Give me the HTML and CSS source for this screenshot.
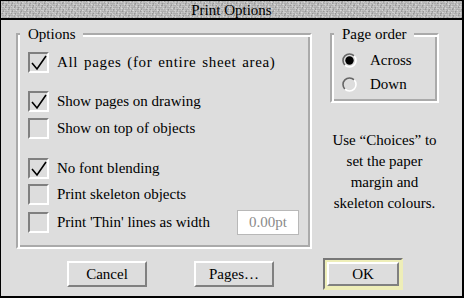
FILE: index.html
```html
<!DOCTYPE html>
<html>
<head>
<meta charset="utf-8">
<link rel="stylesheet" href="styles.css">
</head>
<body>
<div class="window">
  <div class="titlebar">Print Options</div>
  <div class="content">
    <div class="main">
      <fieldset class="group options">
        <legend>Options</legend>
        <div class="rows">
          <div class="row"><span class="check"><svg viewBox="0 0 17 17" width="17" height="17"><polyline points="2,9 7,15 16,2" /></svg></span><span class="label wide">All pages (for entire sheet area)</span></div>
          <div class="row sep"><span class="check"><svg viewBox="0 0 17 17" width="17" height="17"><polyline points="2,9 7,15 16,2" /></svg></span><span class="label">Show pages on drawing</span></div>
          <div class="row"><span class="check"></span><span class="label">Show on top of objects</span></div>
          <div class="row sep2"><span class="check"><svg viewBox="0 0 17 17" width="17" height="17"><polyline points="2,9 7,15 16,2" /></svg></span><span class="label">No font blending</span></div>
          <div class="row tight"><span class="check"></span><span class="label">Print skeleton objects</span></div>
          <div class="row tight"><span class="check"></span><span class="label">Print 'Thin' lines as width</span><span class="field">0.00pt</span></div>
        </div>
      </fieldset>
      <div class="side">
        <fieldset class="group order">
          <legend>Page order</legend>
          <div class="radios">
            <div class="radio-row">
              <svg class="radio" viewBox="0 0 15 15" width="15" height="15">
                <circle cx="7.5" cy="7.5" r="6.5" fill="#dddddd"/>
                <path d="M2.9 12.1 A6.5 6.5 0 0 1 12.1 2.9" fill="none" stroke="#666" stroke-width="1.6"/>
                <path d="M12.1 2.9 A6.5 6.5 0 0 1 2.9 12.1" fill="none" stroke="#fff" stroke-width="1.6"/>
                <circle cx="7.5" cy="7.5" r="4.2" fill="#000"/>
              </svg>
              <span>Across</span>
            </div>
            <div class="radio-row">
              <svg class="radio" viewBox="0 0 15 15" width="15" height="15">
                <circle cx="7.5" cy="7.5" r="6.5" fill="#dddddd"/>
                <path d="M2.9 12.1 A6.5 6.5 0 0 1 12.1 2.9" fill="none" stroke="#666" stroke-width="1.6"/>
                <path d="M12.1 2.9 A6.5 6.5 0 0 1 2.9 12.1" fill="none" stroke="#fff" stroke-width="1.6"/>
              </svg>
              <span>Down</span>
            </div>
          </div>
        </fieldset>
        <p class="info">Use “Choices” to<br>set the paper<br>margin and<br>skeleton colours.</p>
      </div>
    </div>
    <div class="buttons">
      <div class="btn cancel">Cancel</div>
      <div class="btn pages">Pages…</div>
      <div class="default"><div class="btn ok">OK</div></div>
    </div>
  </div>
</div>
</body>
</html>
```
FILE: styles.css
```css
body {
  margin: 0;
  font-family: "Liberation Serif", "Times New Roman", serif;
  font-size: 15px;
  color: #000;
}

.window {
  width: 464px;
  height: 298px;
  box-sizing: border-box;
  border: solid #000;
  border-width: 1px 2px 2px 1px;
  display: flex;
  flex-direction: column;
  background: #dddddd;
  overflow: hidden;
}

.titlebar {
  height: 17px;
  line-height: 18px;
  border-bottom: 2px solid #000;
  text-align: center;
  background-color: #bdbdbd;
  background-image:
    repeating-linear-gradient(90deg, rgba(255,255,255,0.22) 0 1px, transparent 1px 3px),
    repeating-linear-gradient(0deg, rgba(0,0,0,0.09) 0 1px, transparent 1px 2px),
    repeating-linear-gradient(37deg, rgba(255,255,255,0.25) 0 1px, transparent 1px 5px),
    repeating-linear-gradient(-61deg, rgba(0,0,0,0.12) 0 1px, transparent 1px 4px);
}

.content {
  flex: 1;
  display: flex;
  flex-direction: column;
}

.main {
  display: flex;
  align-items: flex-start;
  padding: 6px 0 0 15px;
  gap: 18px;
}

.group {
  margin: 0;
  padding: 0 2px;
  border: 2px solid;
  border-color: #aaaaaa #ffffff #ffffff #aaaaaa;
  box-shadow: inset 2px 2px 0 #ffffff, inset -2px -2px 0 #aaaaaa;
  min-width: 0;
  box-sizing: border-box;
}

.group legend {
  padding: 0 7px 0 8px;
  margin: 0;
  line-height: 16px;
  background: #dddddd;
}

.options {
  width: 296px;
}

.rows {
  padding: 10px 9px 12px 8px;
  display: flex;
  flex-direction: column;
}

.row {
  display: flex;
  align-items: center;
  min-height: 21px;
  margin-top: 6px;
}

.row:first-child { margin-top: 0; }
.row.sep { margin-top: 18px; }
.row.sep2 { margin-top: 19px; }
.row.tight { margin-top: 5px; }

.check {
  width: 21px;
  height: 21px;
  box-sizing: border-box;
  border: 2px solid;
  border-color: #808080 #ffffff #ffffff #808080;
  flex: none;
  display: block;
}

.check svg {
  display: block;
}

.check polyline {
  fill: none;
  stroke: #000;
  stroke-width: 1.6;
}

.label {
  margin-left: 8px;
  white-space: nowrap;
}

.label.wide {
  letter-spacing: 0.65px;
  word-spacing: 1.5px;
}

.field {
  margin-left: auto;
  width: 62px;
  height: 25px;
  box-sizing: border-box;
  border: 1px solid #b8b8b8;
  background: #ffffff;
  color: #8a8a8a;
  text-align: center;
  line-height: 23px;
}

.side {
  width: 109px;
  display: flex;
  flex-direction: column;
}

.order {
  width: 109px;
}

.radios {
  padding: 8px 0 7px 8px;
}

.radio-row {
  display: flex;
  align-items: center;
  height: 20px;
}

.radio-row + .radio-row {
  margin-top: 4px;
}

.radio {
  display: block;
  flex: none;
  margin-right: 13px;
}

.info {
  margin: 27px 0 0 0;
  text-align: center;
  line-height: 21px;
  white-space: nowrap;
}

.buttons {
  display: flex;
  align-items: center;
  margin-top: 9px;
  padding-left: 66px;
}

.btn {
  width: 80px;
  height: 26px;
  box-sizing: border-box;
  border: 2px solid;
  border-color: #ffffff #808080 #808080 #ffffff;
  background: #dddddd;
  text-align: center;
  line-height: 22px;
}

.pages {
  margin-left: 47px;
}

.default {
  margin-left: 49px;
  width: 80px;
  height: 32px;
  box-sizing: border-box;
  border: 2px solid;
  border-color: #777777 #eeeeb8 #eeeeb8 #777777;
  padding: 2px;
  background: #eeeeb8;
}

.ok {
  width: 72px;
  height: 24px;
  line-height: 20px;
}
```
